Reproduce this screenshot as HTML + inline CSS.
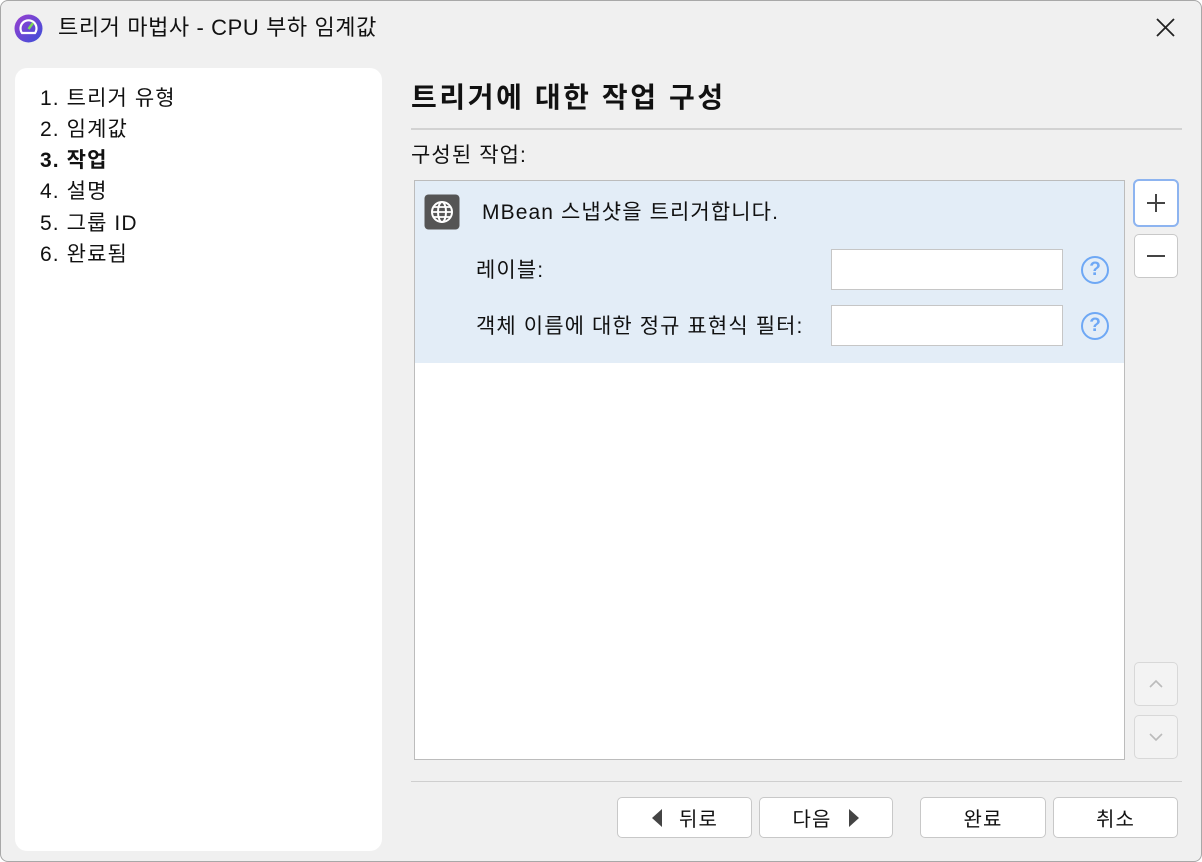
<!DOCTYPE html>
<html><head><meta charset="utf-8"><style>
*{margin:0;padding:0;box-sizing:border-box}
body{width:1202px;height:862px;overflow:hidden;background:#fff;font-family:"Liberation Sans","Noto Sans CJK KR",sans-serif;color:#111;font-size:21px;letter-spacing:1.1px}
.win{position:absolute;left:0;top:0;width:1202px;height:862px;background:#f0f0f0;box-shadow:inset 0 0 0 1px #a8a8a8;border-radius:8px}
.a{position:absolute;white-space:nowrap;line-height:1}
.side{position:absolute;left:15px;top:68px;width:367px;height:783px;background:#fff;border-radius:12px}
.btn{position:absolute;background:#fff;border:1px solid #c8c8c8;border-radius:5px;display:flex;align-items:center;justify-content:center;font-size:20px}
.inp{position:absolute;background:#fff;border:1px solid #c6c6c6;left:831px;width:232px;height:41px}
.help{position:absolute;left:1081px;width:28px;height:28px;border:2.5px solid #6ea8f5;border-radius:50%;color:#6ea8f5;font-size:19px;font-weight:bold;text-align:center;line-height:23px;letter-spacing:0}
</style></head><body>
<div class="win">
<svg style="position:absolute;left:14px;top:14px" width="29" height="29" viewBox="0 0 29 29"><defs><linearGradient id="g" x1="0" y1="0" x2="1" y2="1"><stop offset="0" stop-color="#9a3fd0"/><stop offset="1" stop-color="#3b4fd8"/></linearGradient></defs><circle cx="14.5" cy="14.5" r="14" fill="url(#g)"/><path d="M8 19 A8 8 0 1 1 21 19 Z" fill="none" stroke="#fff" stroke-width="2.2"/><path d="M14.5 15 L19 9" stroke="#7ed957" stroke-width="2.5"/></svg>
<div class="a" style="left:58px;top:17px;font-size:22px;letter-spacing:0.6px">트리거 마법사 - CPU 부하 임계값</div>
<svg style="position:absolute;left:1155px;top:17px" width="21" height="21"><path d="M2 2L19 19M19 2L2 19" stroke="#222" stroke-width="1.8"/></svg>
<div class="side"></div>
<div class="a" style="left:40px;top:88px">1. 트리거 유형</div>
<div class="a" style="left:40px;top:119px">2. 임계값</div>
<div class="a" style="left:40px;top:150px;font-weight:bold">3. 작업</div>
<div class="a" style="left:40px;top:181px">4. 설명</div>
<div class="a" style="left:40px;top:213px">5. 그룹 ID</div>
<div class="a" style="left:40px;top:244px">6. 완료됨</div>
<div class="a" style="left:411px;top:84px;font-size:28px;font-weight:bold;letter-spacing:2.6px">트리거에 대한 작업 구성</div>
<div style="position:absolute;left:411px;top:128px;width:771px;height:2px;background:#d2d2d2"></div>
<div class="a" style="left:411px;top:145px">구성된 작업:</div>
<div style="position:absolute;left:414px;top:180px;width:711px;height:580px;background:#fff;border:1px solid #bcbcbc"></div>
<div style="position:absolute;left:415px;top:181px;width:709px;height:182px;background:#e3edf7"></div>
<svg style="position:absolute;left:423px;top:193px" width="38" height="38" viewBox="0 0 38 38"><rect x="1.5" y="1.5" width="35" height="35" rx="4" fill="#555"/><circle cx="19" cy="19" r="10" fill="none" stroke="#fff" stroke-width="2"/><ellipse cx="19" cy="19" rx="4" ry="10" fill="none" stroke="#fff" stroke-width="2"/><path d="M9 19H29M11 14H27M11 24H27" stroke="#fff" stroke-width="1.8"/></svg>
<div class="a" style="left:482px;top:202px">MBean 스냅샷을 트리거합니다.</div>
<div class="a" style="left:476px;top:260px">레이블:</div>
<div class="a" style="left:476px;top:316px">객체 이름에 대한 정규 표현식 필터:</div>
<div class="inp" style="top:249px"></div>
<div class="inp" style="top:305px"></div>
<div class="help" style="top:256px">?</div>
<div class="help" style="top:312px">?</div>
<div class="btn" style="left:1133px;top:179px;width:46px;height:48px;border:2px solid #8db4f0;border-radius:6px"><svg width="20" height="20"><path d="M10 1V19M1 10H19" stroke="#444" stroke-width="2"/></svg></div>
<div class="btn" style="left:1134px;top:234px;width:44px;height:44px"><svg width="20" height="20"><path d="M1 10H19" stroke="#444" stroke-width="2"/></svg></div>
<div class="btn" style="left:1134px;top:662px;width:44px;height:44px;background:#f3f3f3;border-color:#d8d8d8"><svg width="16" height="10"><path d="M2 8L8 2L14 8" fill="none" stroke="#bbb" stroke-width="1.6"/></svg></div>
<div class="btn" style="left:1134px;top:715px;width:44px;height:44px;background:#f3f3f3;border-color:#d8d8d8"><svg width="16" height="10"><path d="M2 2L8 8L14 2" fill="none" stroke="#bbb" stroke-width="1.6"/></svg></div>
<div style="position:absolute;left:411px;top:781px;width:771px;height:1px;background:#cfcfcf"></div>
<div class="btn" style="left:617px;top:797px;width:135px;height:41px"><svg width="12" height="20" style="margin-right:16px"><path d="M11 1L1 10L11 19Z" fill="#444"/></svg>뒤로</div>
<div class="btn" style="left:759px;top:797px;width:134px;height:41px">다음<svg width="12" height="20" style="margin-left:16px"><path d="M1 1L11 10L1 19Z" fill="#444"/></svg></div>
<div class="btn" style="left:920px;top:797px;width:126px;height:41px">완료</div>
<div class="btn" style="left:1053px;top:797px;width:125px;height:41px">취소</div>
</div>
</body></html>
